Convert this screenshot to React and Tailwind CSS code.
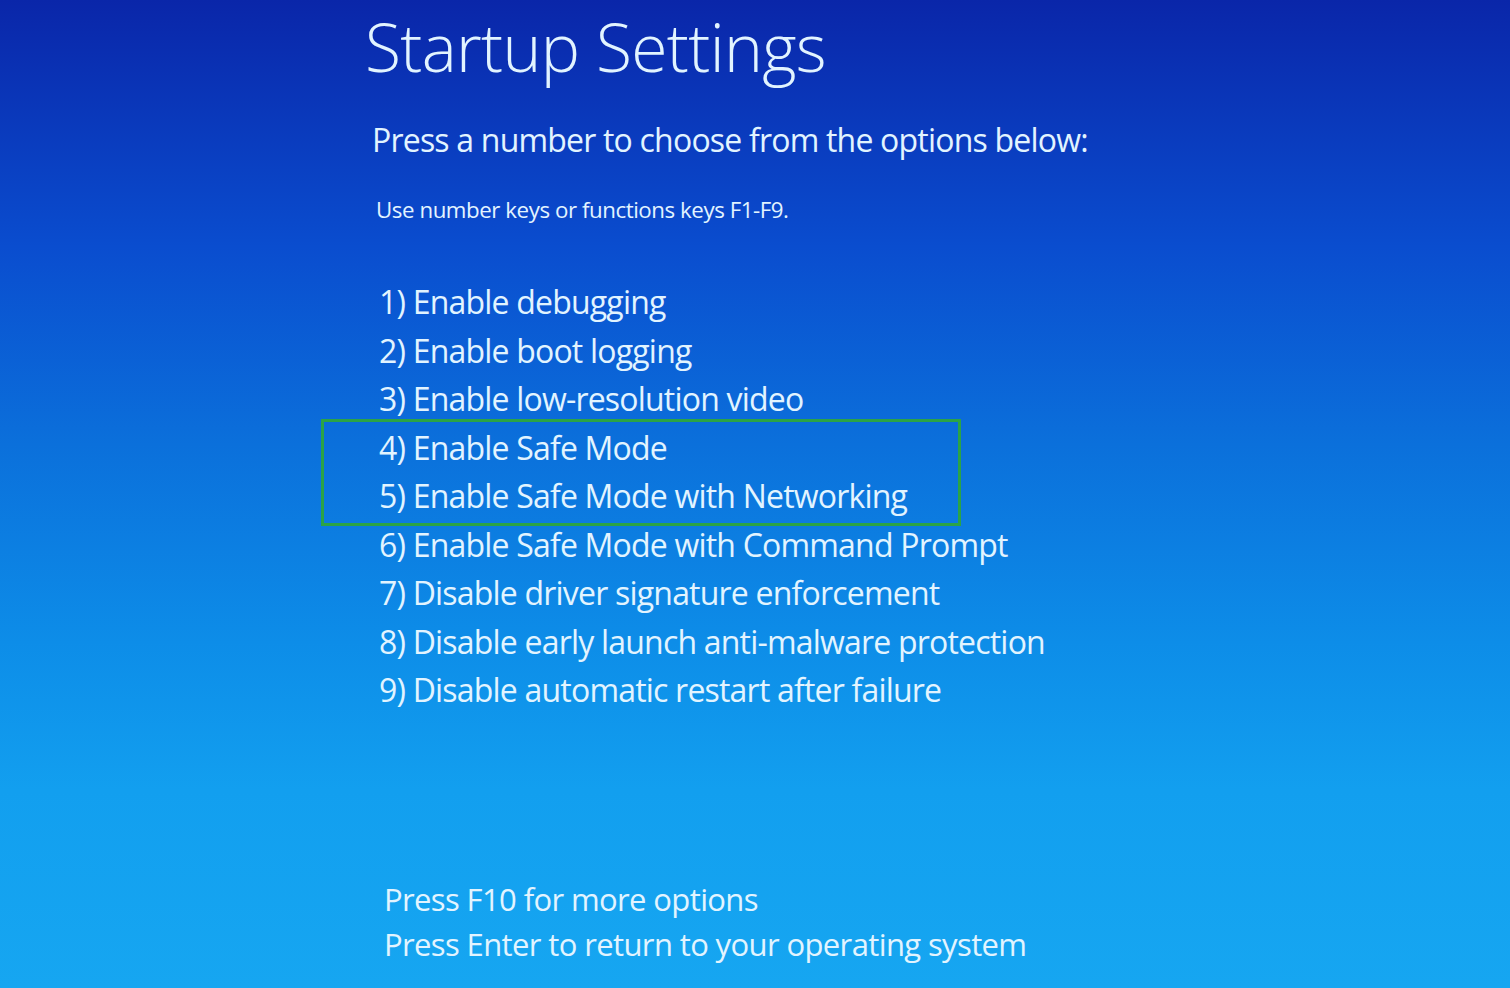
import React from 'react';

const options = [
  'Enable debugging',
  'Enable boot logging',
  'Enable low-resolution video',
  'Enable Safe Mode',
  'Enable Safe Mode with Networking',
  'Enable Safe Mode with Command Prompt',
  'Disable driver signature enforcement',
  'Disable early launch anti-malware protection',
  'Disable automatic restart after failure',
];

function Option({ n, label }) {
  return (
    <div className="h-[48.5px] flex items-center text-[32px] tracking-[-0.025em] whitespace-nowrap">
      {n}) {label}
    </div>
  );
}

export default function App() {
  return (
    <div
      className="w-full h-[988px] overflow-hidden text-[#e2f4ff] bg-[linear-gradient(180deg,#0a26a9_0%,#0a4dcf_25%,#0b70db_45%,#0d8de8_65%,#129fef_80%,#16a6f1_100%)]"
      style={{ fontFamily: '"Open Sans", "Noto Sans", sans-serif' }}
    >
      <div className="pl-[365px] pt-[6px] flex flex-col">
        <h1 className="text-[66px] font-light leading-[80px] tracking-[-0.01em]">Startup Settings</h1>

        <p className="mt-[34px] ml-[7px] text-[32px] leading-[40px] tracking-[-0.025em] whitespace-nowrap">
          Press a number to choose from the options below:
        </p>

        <p className="mt-[36px] ml-[11px] text-[22.3px] leading-[28px] tracking-[-0.02em] whitespace-nowrap">
          Use number keys or functions keys F1-F9.
        </p>

        <div className="mt-[54px] ml-[14px] flex flex-col">
          {options.slice(0, 3).map((o, i) => (
            <Option key={i} n={i + 1} label={o} />
          ))}
          <div className="-ml-[58px] -my-[5px] w-[640px] border-[3px] border-[#2ba346] pl-[55px] py-[2px]">
            {options.slice(3, 5).map((o, i) => (
              <Option key={i} n={i + 4} label={o} />
            ))}
          </div>
          {options.slice(5).map((o, i) => (
            <Option key={i} n={i + 6} label={o} />
          ))}
        </div>

        <div className="mt-[162px] ml-[19px] flex flex-col text-[31px] tracking-[-0.02em] whitespace-nowrap">
          <div className="h-[45px] flex items-center">Press F10 for more options</div>
          <div className="h-[45px] flex items-center">Press Enter to return to your operating system</div>
        </div>
      </div>
    </div>
  );
}
